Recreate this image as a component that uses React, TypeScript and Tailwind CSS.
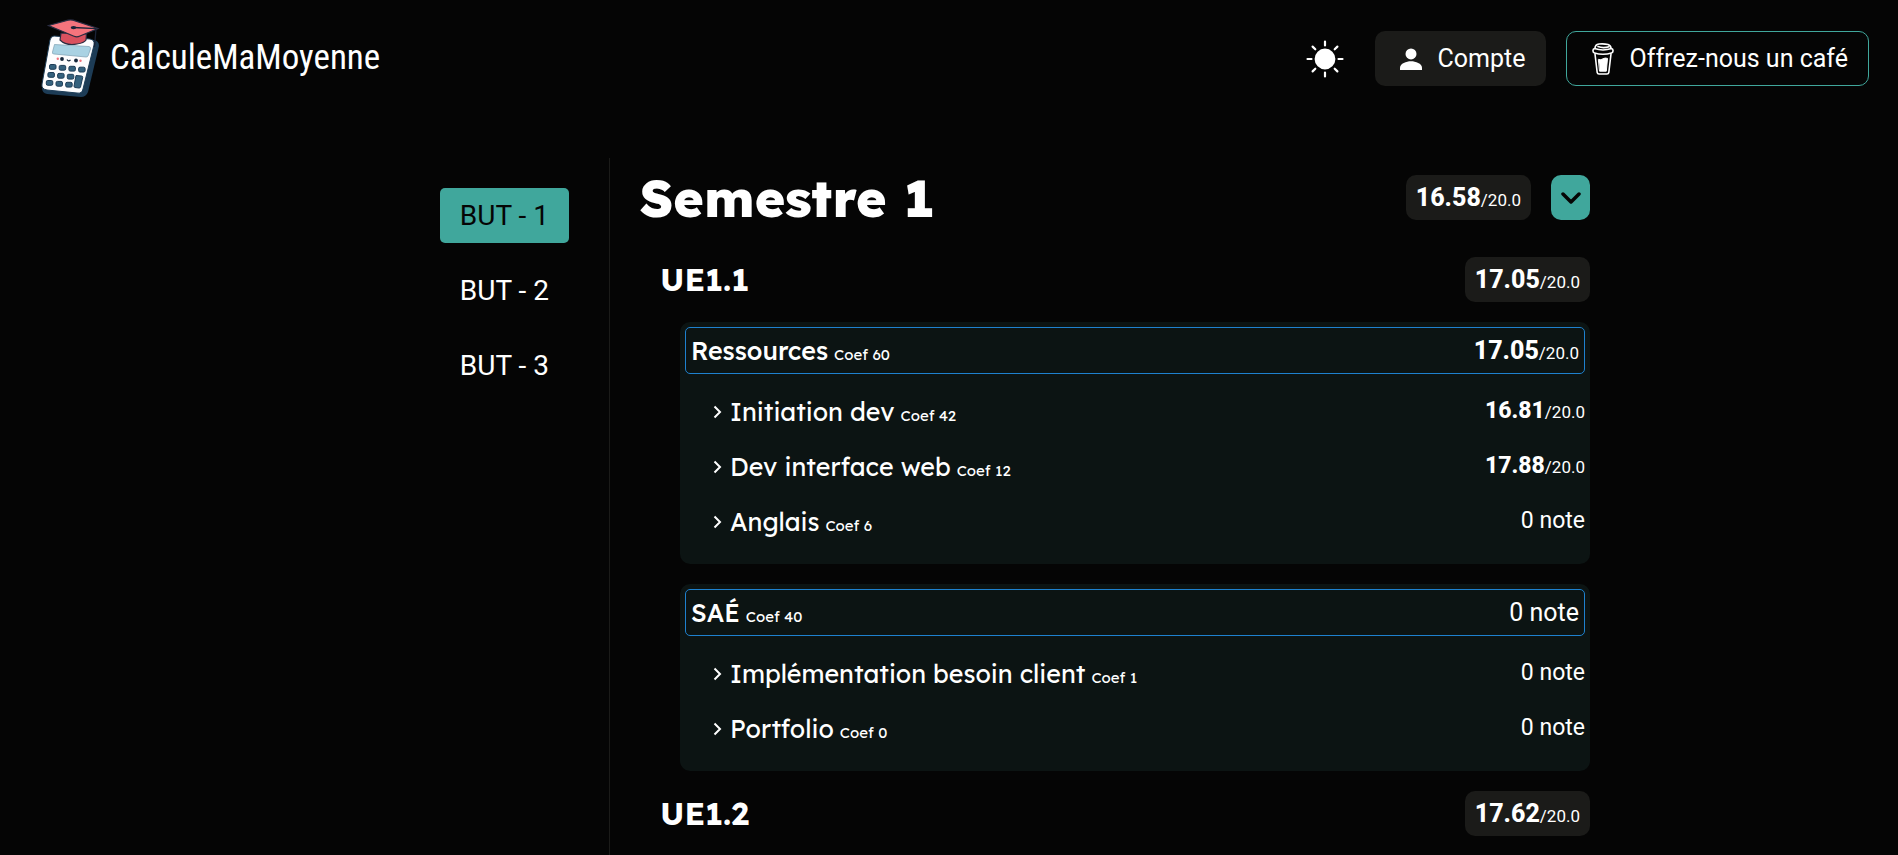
import type { ReactNode } from "react";

type Item = { name: string; coef: number; grade?: string };
type Group = Item & { items: Item[] };

const years = ["BUT - 1", "BUT - 2", "BUT - 3"];

const groups: Group[] = [
  {
    name: "Ressources",
    coef: 60,
    grade: "17.05",
    items: [
      { name: "Initiation dev", coef: 42, grade: "16.81" },
      { name: "Dev interface web", coef: 12, grade: "17.88" },
      { name: "Anglais", coef: 6 },
    ],
  },
  {
    name: "SAÉ",
    coef: 40,
    items: [
      { name: "Implémentation besoin client", coef: 1 },
      { name: "Portfolio", coef: 0 },
    ],
  },
];

function Logo() {
  const keys = [0, 1, 2, 3, 4, 5, 6, 8, 9, 10];
  return (
    <svg viewBox="0 3 70 92" className="h-[92px] w-[70px]" aria-hidden="true">
      <path d="M21 27 L60 30 Q65 31 65 36 L54 82 Q52 87 47 87 L13 84 Q8 83 8 78 Z" fill="#1d3c56" />
      <path d="M20 26 L56 29 Q61 30 60 35 L49 79 Q48 84 43 83 L13 80 Q7 79 8 74 L16 30 Q17 26 20 26Z" fill="#fdfdfe" stroke="#1d3c56" strokeWidth="1" />
      <path d="M20.5 34.5 L55 36.500 Q57 37 56.500 39 L54 46 Q53.500 47 52 47 L20 44 Q18 44 18.500 42Z" fill="#a9d2e3" stroke="#7d9fb2" strokeWidth=".7" />
      <g fill="#16283c">
        <circle cx="28" cy="49" r="1.900" />
        <circle cx="42" cy="50.500" r="1.900" />
      </g>
      <path d="M33 49.500 Q34.500 52 36.500 49.800" fill="none" stroke="#16283c" strokeWidth="1.200" />
      <circle cx="23.800" cy="48.800" r="1.200" fill="#f2707b" />
      <circle cx="46.500" cy="50.800" r="1.200" fill="#f2707b" />
      <g fill="#35627e" stroke="#1d3c56" strokeWidth="1">
        {keys.map((k) => {
          const row = Math.floor(k / 4);
          const col = k % 4;
          return (
            <rect key={k} x={15.5 + col * 9.7 - row * 1.6} y={54.5 + col * 0.9 + row * 8} width="6.500" height="4.800" rx="1.400" />
          );
        })}
        <path d="M42 65.500 L47.500 66 Q49 66.200 48.700 67.500 L46.500 77 Q46 78.300 45 78 L41 77.500 Q39.800 77 40 76Z" />
      </g>
      <path d="M27 23 L26 30 Q32 36 43 34 Q50 33 52 30 L52.500 24Z" fill="#d9515f" stroke="#2a2d42" strokeWidth="1.200" />
      <path d="M14.500 15.500 L34 10.200 Q36.500 9.600 39 10.200 L64 18.500 L46 26 Q43 27.500 40 26.300Z" fill="#f5747d" stroke="#2a2d42" strokeWidth="1.200" />
      <path d="M39.500 17.500 L62 18.700 L60.500 37" fill="none" stroke="#1b2438" strokeWidth="1.300" />
      <ellipse cx="39.500" cy="17.600" rx="2.800" ry="1.700" fill="#1b2438" />
    </svg>
  );
}

function Sun() {
  return (
    <svg viewBox="0 0 38 38" className="size-[38px]" fill="#fff" stroke="#fff" strokeWidth="2.200" strokeLinecap="round">
      <circle cx="19" cy="19" r="9.300" />
      <path d="M19 1.500v4M19 32.500v4M1.500 19h4M32.500 19h4M6.600 6.600l2.700 2.700M28.700 28.700l2.700 2.700M6.600 31.400l2.700-2.700M28.700 9.300l2.700-2.700" />
    </svg>
  );
}

function User() {
  return (
    <svg viewBox="0 0 24 24" className="w-[22px] h-[22px]" fill="#fff" aria-hidden="true">
      <ellipse cx="12" cy="6.500" rx="6" ry="6" />
      <path d="M0 24v-2.500C0 17 7 14.500 12 14.500s12 2.500 12 7V24z" />
    </svg>
  );
}

function Cup() {
  return (
    <svg viewBox="0 0 22 32" className="h-8 w-[22px]" fill="none" stroke="#fff" strokeWidth="1.600" strokeLinejoin="round" strokeLinecap="round" aria-hidden="true">
      <path d="M3 5.500 Q3 1.500 7 1 Q12 .5 16 1.500 Q19 2.500 19 5.500" />
      <path d="M6 3.600 Q11 5.500 17 3.800" />
      <path d="M2.500 5.600 Q11 8.500 19.500 5.600 Q21.200 6.200 21 8 Q21 9.600 19.500 10 Q11 12.500 2.500 10 Q1 9.600 1 8 Q.8 6.200 2.500 5.600Z" />
      <path d="M3 11 L5.200 29.500 Q5.500 31 7 31 H15 Q16.500 31 16.800 29.500 L19 11" />
      <path d="M6.700 16.500 Q9 17.300 11 15.800 Q13 14.500 15.500 15.400 L14.300 28.200 H7.900Z" fill="#fff" strokeWidth="1" />
    </svg>
  );
}

function Chevron() {
  return (
    <svg viewBox="0 0 9 14" className="h-[14px] w-[9px]" fill="none" stroke="#fff" strokeWidth="2" aria-hidden="true">
      <path d="M1.500 1.500 L7 7 L1.500 12.500" />
    </svg>
  );
}

function Grade({ value, small = false }: { value?: string; small?: boolean }) {
  if (!value) return <span className={small ? "text-[23px]" : "text-[25px]"}>0 note</span>;
  return (
    <span className="whitespace-nowrap text-[17px]">
      <b className={small ? "text-[23px] font-extrabold" : "text-[25px] font-extrabold"}>{value}</b>/20.0
    </span>
  );
}

function Badge({ value }: { value: string }) {
  return (
    <span className="flex h-[45px] items-center rounded-[10px] bg-[#1b1b19] px-2.5">
      <Grade value={value} />
    </span>
  );
}

function Coef({ value }: { value: number }) {
  return <small className="ml-1.5 text-[15px] font-normal">Coef {value}</small>;
}

function UnitHeader({ name, grade }: { name: string; grade: string }) {
  return (
    <div className="flex items-center justify-between pl-5">
      <h2 className="font-['Lexend','Inter',sans-serif] text-[32px] font-bold leading-[45px]">{name}</h2>
      <Badge value={grade} />
    </div>
  );
}

function Heading({ children }: { children: ReactNode }) {
  return <h3 className="font-['Lexend','Inter',sans-serif] text-[25px] font-medium">{children}</h3>;
}

function GroupCard({ group }: { group: Group }) {
  return (
    <section className="ml-10 rounded-[10px] bg-[#0c1413] p-[5px] pb-[15px]">
      <header className="mb-2.5 flex h-[47px] items-center justify-between rounded-[5px] border border-[#1e81ce] px-[5px]">
        <Heading>
          {group.name}
          <Coef value={group.coef} />
        </Heading>
        <Grade value={group.grade} />
      </header>
      <ul>
        {group.items.map((item) => (
          <li key={item.name} className="flex h-[55px] items-center justify-between pl-7">
            <button type="button" className="flex items-center gap-2 font-['Lexend','Inter',sans-serif] text-[25px]">
              <Chevron />
              <span>
                {item.name}
                <Coef value={item.coef} />
              </span>
            </button>
            <Grade value={item.grade} small />
          </li>
        ))}
      </ul>
    </section>
  );
}

export default function App() {
  return (
    <div className="flex h-screen flex-col overflow-hidden bg-[#050505] font-['Roboto',sans-serif] text-white">
      <header className="flex h-[117px] shrink-0 items-center justify-between pl-[34px] pr-[29px]">
        <a href="#" className="flex items-center gap-1.5 font-['Ubuntu_Condensed','Roboto_Condensed','Roboto',sans-serif] text-[35px]">
          <Logo />
          CalculeMaMoyenne
        </a>
        <div className="flex items-center">
          <button type="button" aria-label="Thème clair" className="mr-[31px]">
            <Sun />
          </button>
          <button type="button" className="mr-5 flex h-[55px] items-center gap-4 rounded-[10px] bg-[#1b1b19] pl-[25px] pr-5 text-[25px]">
            <User />
            Compte
          </button>
          <a href="#" className="flex h-[55px] items-center gap-4 rounded-[10px] border border-[#40a79c] pl-[25px] pr-5 text-[25px]">
            <Cup />
            Offrez-nous un café
          </a>
        </div>
      </header>
      <div className="mt-[41px] grid grow grid-cols-[609fr_981fr_308fr]">
        <nav className="flex flex-col items-end gap-5 pr-10 pt-[30px]">
          {years.map((year, i) => (
            <button
              key={year}
              type="button"
              className={
                i === 0
                  ? "h-[55px] rounded-[5px] bg-[#40a79c] px-5 text-[28px] text-[#050505]"
                  : "h-[55px] rounded-[5px] px-5 text-[28px]"
              }
            >
              {year}
            </button>
          ))}
        </nav>
        <main className="flex flex-col gap-5 border-l border-[#1b1b19] pl-[30px]">
          <div className="flex h-[79px] items-center justify-between">
            <h1 className="font-['Lexend','Inter',sans-serif] text-[52px] font-extrabold">Semestre 1</h1>
            <div className="flex items-center gap-5">
              <Badge value="16.58" />
              <button type="button" aria-label="Replier le semestre" className="flex h-[45px] w-[39px] items-center justify-center rounded-[10px] bg-[#40a79c]">
                <svg viewBox="0 0 20 12" className="h-3 w-5" fill="none" stroke="#050505" strokeWidth="3.500" strokeLinecap="round" strokeLinejoin="round">
                  <path d="M2 2 L10 10 L18 2" />
                </svg>
              </button>
            </div>
          </div>
          <UnitHeader name="UE1.1" grade="17.05" />
          {groups.map((group) => (
            <GroupCard key={group.name} group={group} />
          ))}
          <UnitHeader name="UE1.2" grade="17.62" />
        </main>
      </div>
    </div>
  );
}
